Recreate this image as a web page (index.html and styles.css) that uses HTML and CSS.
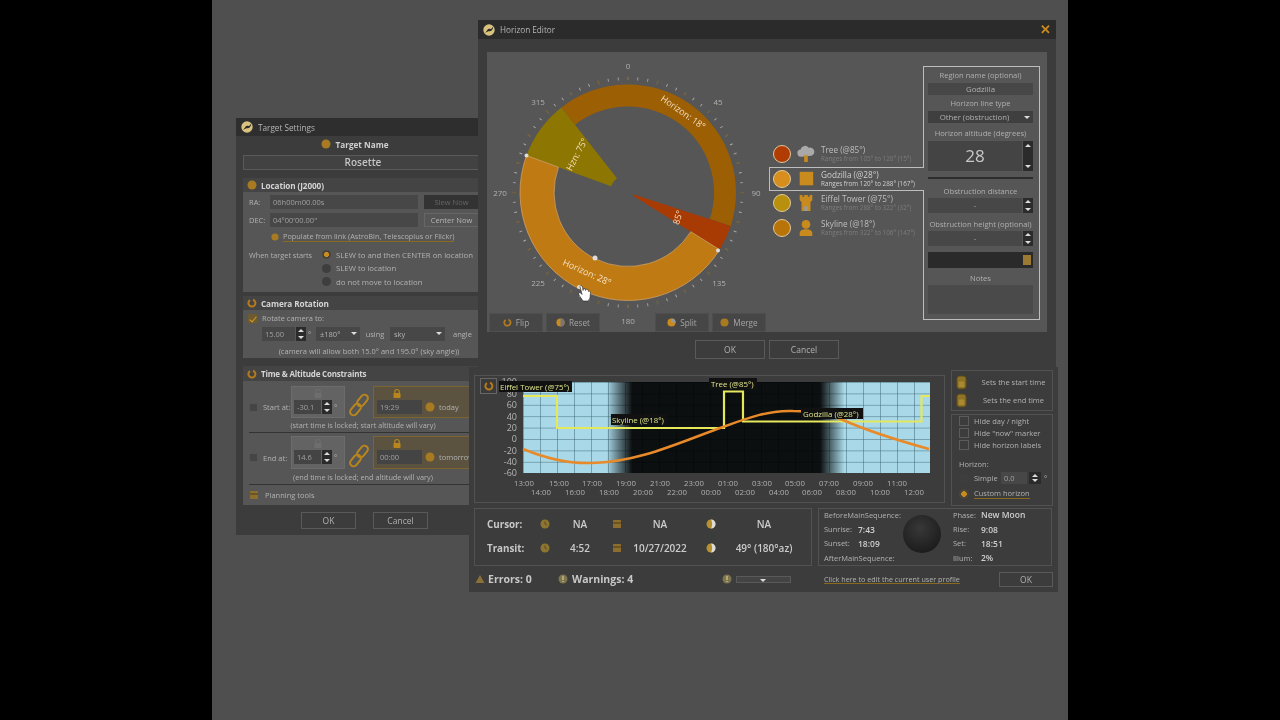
FILE: index.html
```html
<!DOCTYPE html>
<html lang="en">
<head>
<meta charset="utf-8">
<title>Horizon Editor</title>
<link rel="stylesheet" href="styles.css">
</head>
<body>
<svg class="defs" width="0" height="0" aria-hidden="true">
  <defs>
    <symbol id="logo" viewBox="0 0 20 20"><circle cx="10" cy="10" r="9.5" fill="#d8c27e"/><path d="M3 15C6 14 7 8 10 8s3 2 7-4c0 5-3 8-6 8s-4 1-8 3z" fill="#2b2b2b"/></symbol>
    <symbol id="dot" viewBox="0 0 20 20"><circle cx="10" cy="10" r="9" fill="#a87a22"/></symbol>
    <symbol id="ring" viewBox="0 0 20 20"><path d="M12 3.500A7 7 0 1 1 6 4.200" fill="none" stroke="#b57a1c" stroke-width="4"/></symbol>
    <symbol id="half" viewBox="0 0 20 20"><circle cx="10" cy="10" r="9" fill="#c98a1e"/><path d="M10 1a9 9 0 0 1 0 18z" fill="#777"/></symbol>
    <symbol id="pie" viewBox="0 0 20 20"><circle cx="10" cy="10" r="9" fill="#c98a1e"/><path d="M10 10V1a9 9 0 0 1 9 9z" fill="#999"/></symbol>
    <symbol id="clock" viewBox="0 0 20 20"><circle cx="10" cy="10" r="9" fill="#8d7430"/><path d="M10 5v5l4 2" fill="none" stroke="#5a4a20" stroke-width="2"/></symbol>
    <symbol id="cal" viewBox="0 0 20 20"><rect x="2" y="2" width="16" height="16" rx="1" fill="#8d6e2e"/><path d="M2 8h16" stroke="#4a3a18" stroke-width="2"/></symbol>
    <symbol id="moonic" viewBox="0 0 20 20"><circle cx="10" cy="10" r="9" fill="#b8902e"/><path d="M10 1a9 9 0 0 1 0 18c3-5 3-13 0-18z" fill="#ddd"/></symbol>
    <symbol id="warn" viewBox="0 0 20 20"><circle cx="10" cy="10" r="9" fill="#7d7450"/><path d="M10 4v8M10 14v2" stroke="#d8c98a" stroke-width="2.4"/></symbol>
    <symbol id="tri" viewBox="0 0 20 20"><path d="M10 2l9 16H1z" fill="#8a7038"/></symbol>
    <symbol id="lock" viewBox="0 0 20 20"><path d="M5.500 9V6.500a4.500 4.500 0 0 1 9 0V9" fill="none" stroke="currentColor" stroke-width="2.4"/><rect x="3" y="9" width="14" height="10" rx="1.500" fill="currentColor"/></symbol>
    <symbol id="chain" viewBox="0 0 26 26"><g fill="none" stroke="#b8861c" stroke-width="2"><rect x="13" y="2" width="7" height="13" rx="3.500" transform="rotate(40 16.500 8.500)"/><rect x="6" y="11" width="7" height="13" rx="3.500" transform="rotate(40 9.500 17.500)"/></g></symbol>
    <symbol id="shield" viewBox="0 0 12 16"><rect x="1" y="1" width="10" height="14" rx="3" fill="#8e7226" stroke="#5a4a1c"/><rect x="3" y="7" width="6" height="6" rx="1" fill="#a98a30"/></symbol>
    <symbol id="tree" viewBox="0 0 20 20"><path d="M5 13a4 4 0 0 1-1-8 5 5 0 0 1 9-2 4.500 4.500 0 0 1 3 9z" fill="#a9a9a9"/><path d="M8 10l1 2 1-1 1 1 1-2v9H8z" fill="#c98a1e"/></symbol>
    <symbol id="square" viewBox="0 0 20 20"><rect x="3" y="2" width="15" height="15" fill="#c98a1e"/></symbol>
    <symbol id="castle" viewBox="0 0 20 20"><path d="M3 1h3v2h2V1h4v2h2V1h3v6l-2 2v10H5V9L3 7z" fill="#c98a1e"/><path d="M8 19v-4a2 2 0 0 1 4 0v4z" fill="#999"/></symbol>
    <symbol id="person" viewBox="0 0 20 20"><circle cx="10" cy="6" r="4.800" fill="#c98a1e"/><path d="M3 19v-3c0-3 3-4.500 7-4.500s7 1.500 7 4.500v3z" fill="#c98a1e"/></symbol>
    <pattern id="grid" x="523" y="382" width="17" height="11.400" patternUnits="userSpaceOnUse"><path d="M17 0H0V11.400" fill="none" stroke="#3e6676" stroke-width="1"/></pattern>
    <linearGradient id="night" gradientUnits="userSpaceOnUse" x1="523" x2="930" y1="0" y2="0">
      <stop offset=".205" stop-color="#000" stop-opacity="0"/>
      <stop offset=".268" stop-color="#000" stop-opacity=".93"/>
      <stop offset=".73" stop-color="#000" stop-opacity=".93"/>
      <stop offset=".79" stop-color="#000" stop-opacity="0"/>
    </linearGradient>
    <radialGradient id="moon" cx=".45" cy=".35" r=".7"><stop offset="0" stop-color="#383838"/><stop offset="1" stop-color="#1a1a1a"/></radialGradient>
  </defs>
</svg>

<div class="desktop">

  <section class="win win-target">
    <header class="titlebar"><svg class="logo"><use href="#logo"/></svg><span>Target Settings</span></header>
    <div class="t-name"><svg class="ic10"><use href="#dot"/></svg><b>Target Name</b></div>
    <div class="t-rosette">Rosette</div>

    <h3 class="sec"><svg class="ic10"><use href="#dot"/></svg>Location (J2000)</h3>
    <div class="panel p-loc">
      <div class="f-row"><span class="lbl-ra">RA:</span><span class="in in-coord">06h00m00.00s</span><span class="btn btn-dark">Slew Now</span></div>
      <div class="f-row mt4"><span class="lbl-ra">DEC:</span><span class="in in-coord">04°00'00.00"</span><span class="btn">Center Now</span></div>
      <div class="populate"><svg class="ic8"><use href="#dot"/></svg><span class="link">Populate from link (AstroBin, Telescopius or Flickr)</span></div>
      <div class="radios">
        <div class="r-row"><span class="r-lbl">When target starts</span><i class="radio on"></i><span>SLEW to and then CENTER on location</span></div>
        <div class="r-row"><span class="r-lbl"></span><i class="radio"></i><span>SLEW to location</span></div>
        <div class="r-row"><span class="r-lbl"></span><i class="radio"></i><span>do not move to location</span></div>
      </div>
    </div>

    <h3 class="sec"><svg class="ic10"><use href="#ring"/></svg>Camera Rotation</h3>
    <div class="panel p-cam">
      <div class="c-row1"><i class="check on"></i><span>Rotate camera to:</span></div>
      <div class="c-row2">
        <span class="in in-rot">15.00</span><span class="spin"><i class="up"></i><i class="down"></i></span><span class="deg">°</span>
        <span class="sel sel-a">±180°<i class="caret"></i></span><span class="using">using</span>
        <span class="sel sel-b">sky<i class="caret"></i></span><span class="angle">angle</span>
      </div>
      <div class="note note-cam">(camera will allow both 15.0° and 195.0° (sky angle))</div>
    </div>

    <h3 class="sec sec-time"><svg class="ic10"><use href="#ring"/></svg>Time &amp; Altitude Constraints</h3>
    <div class="panel p-time">
      <div class="ta-row">
        <i class="check"></i><span class="ta-lbl">Start at:</span>
        <div class="ta-box"><svg class="ta-lock dim"><use href="#lock"/></svg><div class="ta-line"><span class="in in-alt">-30.1</span><span class="spin"><i class="up"></i><i class="down"></i></span><span class="deg">°</span></div></div>
        <svg class="chain"><use href="#chain"/></svg>
        <div class="ta-box active"><svg class="ta-lock"><use href="#lock"/></svg><div class="ta-line"><span class="in in-time">19:29</span><svg class="ta-ok"><use href="#dot"/></svg><span>today</span></div></div>
      </div>
      <div class="note note-a">(start time is locked; start altitude will vary)</div>
      <div class="rule"></div>
      <div class="ta-row ta-row2">
        <i class="check"></i><span class="ta-lbl">End at:</span>
        <div class="ta-box"><svg class="ta-lock dim"><use href="#lock"/></svg><div class="ta-line"><span class="in in-alt">14.6</span><span class="spin"><i class="up"></i><i class="down"></i></span><span class="deg">°</span></div></div>
        <svg class="chain"><use href="#chain"/></svg>
        <div class="ta-box active"><svg class="ta-lock"><use href="#lock"/></svg><div class="ta-line"><span class="in in-time">00:00</span><svg class="ta-ok"><use href="#dot"/></svg><span>tomorrow</span></div></div>
      </div>
      <div class="note note-b">(end time is locked; end altitude will vary)</div>
      <div class="rule r2"></div>
      <div class="planning"><svg class="ic10"><use href="#cal"/></svg><span>Planning tools</span></div>
    </div>
    <footer class="t-foot"><span class="btn-big b-ok">OK</span><span class="btn-big b-cancel">Cancel</span></footer>
  </section>

  <section class="win win-horizon">
    <header class="titlebar tb-h"><svg class="logo"><use href="#logo"/></svg><span>Horizon Editor</span><span class="close">✕</span></header>
    <div class="h-panel">
      <div class="h-left">
        <svg class="wheel" viewBox="-140 -140 280 280" width="280" height="281">
          <circle r="114" fill="none" stroke="#a9a9a9" stroke-width="3" pathLength="360" stroke-dasharray="0.45 4.550" stroke-dashoffset="0.22" transform="rotate(-90)"/>
          <circle r="114" fill="none" stroke="#6f5f3a" stroke-width="4" pathLength="360" stroke-dasharray="0.7 14.300" stroke-dashoffset="0.35" transform="rotate(-90)"/>
          <path d="M-66.500 -85.100A108 108 0 0 1 102.700 33.400L81.800 26.600A86 86 0 0 0 -52.900 -67.800Z" fill="#9c5f04"/>
          <path d="M102.700 33.400A108 108 0 0 1 91.600 57.200L5.100 3.200L5.700 1.900Z" fill="#a83a04"/>
          <path d="M-101.500 -36.900A108 108 0 0 1 -66.500 -85.100L-11.100 -14.200A18 18 0 0 0 -16.900 -6.200Z" fill="#8e7602"/>
          <path d="M91.600 57.200A108 108 0 0 1 -101.500 -36.900L-69.500 -25.300A74 74 0 0 0 62.800 39.200Z" fill="#bf7a14" stroke="#d8a868" stroke-width=".7"/>
          <g class="wheel-lbl">
            <text x="55" y="-80" transform="rotate(35 55 -80)" dy="3">Horizon: 18°</text>
            <text x="-41" y="80" transform="rotate(24 -41 80)" dy="3">Horizon: 28°</text>
            <text x="-51" y="-38" transform="rotate(-62 -51 -38)" dy="3">Hzn: 75°</text>
            <text x="50" y="25" transform="rotate(-72 50 25)" dy="3">85°</text>
          </g>
          <g class="wheel-deg">
            <text x="0" y="-124">0</text><text x="90" y="-88">45</text><text x="128" y="3">90</text><text x="91" y="93">135</text>
            <text x="0" y="131">180</text><text x="-90" y="93">225</text><text x="-128" y="3">270</text><text x="-90" y="-88">315</text>
          </g>
          <g fill="#ddd"><circle cx="90" cy="58" r="2"/><circle cx="-101.500" cy="-37" r="2"/><circle cx="-49" cy="94.600" r="2"/><circle cx="-33" cy="65.600" r="2.500"/></g>
          <path class="hand" d="M-48 94l1-1 1.500 1 .5 4 .5-2 1.500 0 .5 2 1-1.500 1.500.5 .5 2 1-.5 1 1-.5 6-2 3h-5l-4-6-.5-2 1.500-.5 2 2z"/>
        </svg>
        <div class="h-btns">
          <span class="tool"><svg class="ic9"><use href="#ring"/></svg>Flip</span>
          <span class="tool"><svg class="ic9"><use href="#half"/></svg>Reset</span>
          <span class="tool-gap"></span>
          <span class="tool"><svg class="ic9"><use href="#pie"/></svg>Split</span>
          <span class="tool"><svg class="ic9"><use href="#dot"/></svg>Merge</span>
        </div>
      </div>
      <ul class="legend">
        <li class="lg"><i class="swatch c-tree"></i><svg class="lg-ic"><use href="#tree"/></svg><div><b>Tree (@85°)</b><small>Ranges from 105° to 120° (15°)</small></div></li>
        <li class="lg sel-row"><i class="swatch c-god"></i><svg class="lg-ic"><use href="#square"/></svg><div><b>Godzilla (@28°)</b><small>Ranges from 120° to 288° (167°)</small></div></li>
        <li class="lg"><i class="swatch c-eif"></i><svg class="lg-ic"><use href="#castle"/></svg><div><b>Eiffel Tower (@75°)</b><small>Ranges from 288° to 322° (32°)</small></div></li>
        <li class="lg"><i class="swatch c-sky"></i><svg class="lg-ic"><use href="#person"/></svg><div><b>Skyline (@18°)</b><small>Ranges from 322° to 106° (147°)</small></div></li>
      </ul>
      <aside class="editor">
        <label class="e-lbl first">Region name (optional)</label>
        <div class="e-in e-12">Godzilla</div>
        <label class="e-lbl">Horizon line type</label>
        <div class="e-in e-12 e-sel">Other (obstruction)<i class="caret"></i></div>
        <label class="e-lbl m4">Horizon altitude (degrees)</label>
        <div class="e-num"><div class="e-big">28</div><span class="spin spin-tall"><i class="up"></i><i class="down"></i></span></div>
        <div class="e-rule"></div>
        <label class="e-lbl m6">Obstruction distance</label>
        <div class="e-num e-15"><div class="e-dash">-</div><span class="spin"><i class="up"></i><i class="down"></i></span></div>
        <label class="e-lbl m5">Obstruction height (optional)</label>
        <div class="e-num e-15"><div class="e-dash">-</div><span class="spin"><i class="up"></i><i class="down"></i></span></div>
        <div class="e-bar"><i></i></div>
        <label class="e-lbl m4">Notes</label>
        <div class="e-notes"></div>
      </aside>
    </div>
    <footer class="h-foot"><span class="btn-big">OK</span><span class="btn-big">Cancel</span></footer>
  </section>

  <section class="win win-seq">
    <div class="s-top">
      <div class="chart-panel">
        <svg class="chart" viewBox="474 375 471 128" width="471" height="128">
          <rect x="523" y="382" width="407" height="91" fill="#a9d9e8"/>
          <rect x="523" y="382" width="407" height="91" fill="url(#grid)"/>
          <rect x="523" y="382" width="407" height="91" fill="url(#night)"/>
          <path d="M523 396H557V428H724V391.500H743V421.500H921.500V396H930" fill="none" stroke="#e6e85c" stroke-width="2.200"/>
          <path d="M523 449C545 458 570 464 592 463C640 462 680 442 723 427C750 417 770 410 793 411C810 411 830 414 843 420C870 432 900 441 929 449" fill="none" stroke="#e88a2a" stroke-width="2.500"/>
          <g class="y-ax"><text x="517" y="385">100</text><text x="517" y="396.500">80</text><text x="517" y="408">60</text><text x="517" y="419.500">40</text><text x="517" y="431">20</text><text x="517" y="442">0</text><text x="517" y="453.500">-20</text><text x="517" y="465">-40</text><text x="517" y="476">-60</text></g>
          <g class="x-ax">
            <text x="524" y="486">13:00</text><text x="559" y="486">15:00</text><text x="592" y="486">17:00</text><text x="626" y="486">19:00</text><text x="660" y="486">21:00</text><text x="694" y="486">23:00</text><text x="728" y="486">01:00</text><text x="762" y="486">03:00</text><text x="795" y="486">05:00</text><text x="829" y="486">07:00</text><text x="863" y="486">09:00</text><text x="897" y="486">11:00</text>
            <text x="541" y="495">14:00</text><text x="575" y="495">16:00</text><text x="609" y="495">18:00</text><text x="643" y="495">20:00</text><text x="677" y="495">22:00</text><text x="711" y="495">00:00</text><text x="745" y="495">02:00</text><text x="779" y="495">04:00</text><text x="812" y="495">06:00</text><text x="846" y="495">08:00</text><text x="880" y="495">10:00</text><text x="914" y="495">12:00</text>
          </g>
          <g class="tag">
            <rect x="499" y="381" width="73" height="11"/><text x="500" y="390">Eiffel Tower (@75°)</text>
            <rect x="611" y="414" width="56" height="11"/><text x="612" y="423">Skyline (@18°)</text>
            <rect x="709" y="378" width="48" height="11"/><text x="711" y="387">Tree (@85°)</text>
            <rect x="801" y="408" width="62" height="11"/><text x="803" y="417">Godzilla (@28°)</text>
          </g>
        </svg>
        <span class="sync"><svg class="ic10"><use href="#ring"/></svg></span>
      </div>
      <div class="s-side">
        <div class="box box-set">
          <div class="set-row"><svg class="ic-sh"><use href="#shield"/></svg><span>Sets the start time</span></div>
          <div class="set-row"><svg class="ic-sh"><use href="#shield"/></svg><span>Sets the end time</span></div>
        </div>
        <div class="box box-opt">
          <div class="o-row"><i class="check"></i><span>Hide day / night</span></div>
          <div class="o-row"><i class="check"></i><span>Hide "now" marker</span></div>
          <div class="o-row"><i class="check"></i><span>Hide horizon labels</span></div>
          <div class="o-title">Horizon:</div>
          <div class="o-row o-radio"><i class="radio big"></i><span class="o-simple">Simple</span><span class="in in-simple">0.0</span><span class="spin"><i class="up"></i><i class="down"></i></span><span class="deg">°</span></div>
          <div class="o-row o-radio o-cust"><i class="radio big on"></i><span class="link">Custom horizon</span></div>
        </div>
      </div>
    </div>
    <div class="s-info">
      <div class="box info-a">
        <b class="i-l">Cursor:</b><svg class="ic10 i-c"><use href="#clock"/></svg><b class="i-v">NA</b><svg class="ic10 i-c"><use href="#cal"/></svg><b class="i-v">NA</b><svg class="ic10 i-c"><use href="#moonic"/></svg><b class="i-v">NA</b>
        <b class="i-l">Transit:</b><svg class="ic10 i-c"><use href="#clock"/></svg><b class="i-v">4:52</b><svg class="ic10 i-c"><use href="#cal"/></svg><b class="i-v">10/27/2022</b><svg class="ic10 i-c"><use href="#moonic"/></svg><b class="i-v">49° (180°az)</b>
      </div>
      <div class="box info-b">
        <div class="sun">
          <div>BeforeMainSequence:</div>
          <div><span class="k">Sunrise:</span><b>7:43</b></div>
          <div><span class="k">Sunset:</span><b>18:09</b></div>
          <div>AfterMainSequence:</div>
        </div>
        <svg class="moon" viewBox="0 0 38 38"><circle cx="19" cy="19" r="19" fill="url(#moon)"/></svg>
        <div class="sun phase">
          <div><span class="k">Phase:</span><b>New Moon</b></div>
          <div><span class="k">Rise:</span><b>9:08</b></div>
          <div><span class="k">Set:</span><b>18:51</b></div>
          <div><span class="k">Illum:</span><b>2%</b></div>
        </div>
      </div>
    </div>
    <footer class="s-foot">
      <svg class="ic10"><use href="#tri"/></svg><b class="f-err">Errors: 0</b>
      <svg class="ic10"><use href="#warn"/></svg><b class="f-warn">Warnings: 4</b>
      <svg class="ic10"><use href="#warn"/></svg><span class="f-drop"><i class="caret"></i></span>
      <span class="f-link">Click here to edit the current user profile</span>
      <span class="btn-big f-ok">OK</span>
    </footer>
  </section>
</div>
</body>
</html>
```

FILE: styles.css
```css
* { box-sizing: border-box; }
html, body { margin: 0; height: 100%; background: #000; overflow: hidden; }
body { font-family: "Open Sans", "Noto Sans", sans-serif; font-size: 7.5px; color: #b2b2b2; }
.defs { position: absolute; }
i { display: block; font-style: normal; flex: none; }
svg { display: block; flex: none; }
ul { list-style: none; margin: 0; padding: 0; }

.desktop { position: relative; width: 856px; height: 720px; margin: 0 auto; background: #4f4f4f; filter: blur(.4px); }
.win { position: absolute; background: #3c3c3c; }
.win-target { left: 24px; top: 118px; width: 254px; height: 417px; padding: 18px 7px 0; }
.win-horizon { left: 266px; top: 20px; width: 578px; height: 347px; }
.win-seq { left: 257px; top: 367px; width: 589px; height: 225px; }

.titlebar { display: flex; align-items: center; gap: 5px; height: 18px; background: #2e2e2e; padding-left: 5px; font-size: 8.2px; color: #b5b5b5; }
.win-target .titlebar { margin: -18px -7px 0; }
.logo { width: 12px; height: 12px; }
.tb-h { height: 19px; background: #2b2b2b; }
.close { margin-left: auto; margin-right: 5px; margin-top: -1px; color: #c98a1e; font-size: 13px; font-weight: 700; line-height: 13px; }

.ic8 { width: 8px; height: 8px; }
.ic9 { width: 9px; height: 9px; }
.ic10 { width: 10px; height: 10px; }

.t-name { height: 19px; display: flex; align-items: center; justify-content: center; gap: 4px; color: #d0d0d0; font-size: 8.2px; padding: 0 16px 3px 0; }
.t-rosette { height: 15px; margin-bottom: 8px; border: 1px solid #5a5a5a; background: #424242; text-align: center; line-height: 13px; font-size: 10px; font-weight: 600; color: #c4c4c4; }
.sec { display: flex; align-items: center; gap: 4px; height: 14px; margin: 0; padding-left: 4px; background: #444; color: #d4d4d4; font-size: 8.2px; font-weight: 700; letter-spacing: -.1px; }
.sec-time { height: 15px; font-size: 8px; letter-spacing: -.2px; }
.panel { background: #565656; }
.p-loc { height: 100px; margin-bottom: 4px; padding: 3px 0 0 6px; }
.p-cam { height: 48px; margin-bottom: 8px; padding-top: 2px; }
.p-time { height: 124px; padding-top: 5px; }

.f-row { display: flex; align-items: center; height: 14px; }
.mt4 { margin-top: 4px; }
.lbl-ra { width: 21px; }
.in { display: block; background: #474747; color: #a0a0a0; height: 14px; line-height: 14px; padding-left: 3px; }
.in-coord { width: 148px; margin-right: 6px; }
.btn { width: 55px; height: 14px; line-height: 12px; text-align: center; border: 1px solid #666; color: #b5b5b5; flex: none; }
.btn-dark { background: #333; border-color: #333; color: #666; }
.populate { display: flex; align-items: center; gap: 4px; height: 12px; margin: 4px 0 0 22px; font-size: 7.35px; }
.link { border-bottom: 1px solid #8a6a1e; line-height: 9px; color: #b2b2b2; }
.radios { margin-top: 5px; font-size: 7.8px; }
.r-row { display: flex; align-items: center; height: 13.500px; white-space: nowrap; }
.r-lbl { width: 73px; font-size: 7.3px; }
.radio { width: 9px; height: 9px; border-radius: 50%; background: #3e3e3e; margin-right: 5px; }
.radio.on { background: radial-gradient(circle closest-side, #c98a1e 0 52%, #4a4438 60%); }
.check { position: relative; width: 9px; height: 9px; background: #454545; border: 1px solid #555; }
.check.on { background: #6e5a2c; border-color: #6e5a2c; }
.check.on::after { content: ""; position: absolute; left: 2px; top: 0; width: 3px; height: 6px; border: solid #d89a2a; border-width: 0 1.400px 1.400px 0; transform: rotate(40deg); }

.c-row1 { display: flex; align-items: center; gap: 5px; height: 12px; padding-left: 5px; }
.c-row2 { display: flex; align-items: center; height: 14px; margin: 3px 0 4px 19px; }
.in-rot { width: 33px; }
.spin { display: flex; flex-direction: column; justify-content: space-between; width: 10px; height: 14px; background: #2b2b2b; margin-left: 1px; flex: none; padding: 2px 0; }
.up, .down { width: 0; height: 0; margin: 0 auto; border-left: 3px solid transparent; border-right: 3px solid transparent; }
.up { border-bottom: 3px solid #ddd; }
.down { border-top: 3px solid #ddd; }
.deg { width: 10px; padding-left: 2px; flex: none; }
.sel { position: relative; display: block; height: 14px; line-height: 14px; padding-left: 4px; background: #474747; flex: none; }
.sel-a { width: 44px; }
.sel-b { width: 55px; }
.using { width: 30px; text-align: center; }
.angle { padding-left: 8px; }
.caret { position: absolute; right: 3px; top: 5px; width: 0; height: 0; border-left: 3px solid transparent; border-right: 3px solid transparent; border-top: 3px solid #ddd; }
.note { height: 12px; line-height: 12px; text-align: center; }
.note-cam { padding-left: 12px; }
.note-a, .note-b { font-size: 7.3px; }
.note-a { margin-top: 1px; }
.note-b { margin-top: 2px; }

.ta-row { display: flex; align-items: center; height: 32px; padding-left: 6px; }
.ta-row2 { height: 33px; }
.ta-row > .check, .ta-lbl { margin-top: 10px; }
.ta-lbl { width: 28px; margin-left: 5px; flex: none; }
.ta-box { width: 54px; height: 100%; background: #636363; border: 1px solid #6c6c6c; flex: none; display: flex; flex-direction: column; align-items: center; }
.ta-box.active { width: 110px; background: #5b5340; border-color: #7b6430; align-items: flex-start; padding-left: 3px; }
.ta-lock { width: 10px; height: 11px; margin-top: 1px; color: #b8861c; }
.ta-box.active .ta-lock { margin-left: 15px; }
.ta-lock.dim { color: #6e6e6e; }
.ta-line { display: flex; align-items: center; height: 14px; margin-top: 1px; }
.in-alt { width: 27px; background: #444; }
.in-time { width: 45px; background: #444; margin-right: 3px; }
.ta-ok { width: 10px; height: 10px; margin-right: 4px; }
.chain { width: 26px; height: 26px; margin: 6px 1px 0; }
.rule { height: 1px; background: #333; margin: 1px 0 3px 6px; }
.rule.r2 { margin-bottom: 0; }
.planning { display: flex; align-items: center; gap: 6px; height: 20px; padding-left: 6px; }
.t-foot { display: flex; margin-top: 7px; padding-left: 58px; gap: 17px; }
.btn-big { display: block; width: 70px; height: 19px; line-height: 17px; text-align: center; border: 1px solid #5a5a5a; background: #3c3c3c; font-size: 8.500px; color: #b0b0b0; flex: none; }
.b-ok, .b-cancel { width: 55px; height: 17px; line-height: 15px; }

.h-panel { display: flex; align-items: flex-start; height: 280px; margin: 13px 9px 0; background: #565656; }
.h-left { display: grid; width: 282px; height: 280px; }
.wheel { grid-area: 1 / 1; margin-left: 1px; }
.wheel-lbl text { fill: #f4e0c0; font-size: 9px; text-anchor: middle; }
.wheel-deg text { fill: #b0b0b0; font-size: 8px; text-anchor: middle; }
.hand { fill: #fff; stroke: #222; stroke-width: .6; }
.h-btns { grid-area: 1 / 1; align-self: end; display: flex; gap: 3px; margin: 0 3px 1px 2px; height: 19px; }
.tool { display: flex; align-items: center; justify-content: center; gap: 4px; width: 54px; height: 19px; background: #464646; border: 1px solid #4e4e4e; color: #a5a5a5; font-size: 8.200px; }
.tool-gap { flex: 1; }

.legend { width: 154px; margin-top: 90px; }
.lg { position: relative; display: flex; align-items: center; height: 24.500px; padding-left: 4px; }
.sel-row { border: 1px solid #bdbdbd; border-right: 0; background: #565656; margin-right: -1px; z-index: 1; padding-left: 3px; }
.swatch { width: 18px; height: 18px; border-radius: 50%; border: 1px solid #e0c898; }
.c-tree { background: #b03c04; }
.c-god { background: #d88e1c; }
.c-eif { background: #b8900e; }
.c-sky { background: #b87408; }
.lg-ic { width: 18px; height: 18px; margin: 0 6px 0 6px; }
.lg b { display: block; font-weight: 400; font-size: 8.200px; line-height: 10px; color: #bebebe; }
.lg small { display: block; font-size: 6.300px; line-height: 8px; color: #7d7d7d; white-space: nowrap; }
.sel-row small, .sel-row b { color: #d0d0d0; }

.editor { width: 117px; height: 254px; margin-top: 14px; border: 1px solid #bdbdbd; padding: 2px 6px 0 4px; }
.e-lbl { display: block; height: 12px; line-height: 12px; margin-top: 2px; text-align: center; color: #b0b0b0; font-size: 7.600px; }
.e-lbl.first { margin-top: 0; }
.e-lbl.m4 { margin-top: 4px; }
.e-lbl.m5 { margin-top: 5px; }
.e-lbl.m6 { margin-top: 6px; }
.e-in { position: relative; margin-top: 2px; background: #474747; text-align: center; color: #b0b0b0; font-size: 7.800px; }
.e-12 { height: 12px; line-height: 12px; }
.e-sel { background: #3f3f3f; padding-right: 12px; }
.e-num { display: flex; height: 30px; margin-top: 2px; }
.e-15 { height: 15px; margin-top: 1px; }
.e-big { flex: 1; background: #444; text-align: center; line-height: 30px; font-size: 17px; color: #c8c8c8; }
.e-dash { flex: 1; background: #474747; text-align: center; line-height: 15px; }
.e-num .spin { height: 100%; }
.spin-tall { padding: 3px 0; }
.e-rule { height: 2px; margin-top: 6px; background: #2d2d2d; }
.e-bar { position: relative; height: 16px; margin-top: 6px; background: #2a2a2a; }
.e-bar i { position: absolute; right: 2px; top: 3px; width: 8px; height: 10px; background: #9b7a34; }
.e-notes { height: 29px; margin-top: 1px; background: #4a4a4a; }
.h-foot { display: flex; justify-content: center; gap: 4px; margin-top: 8px; }

.s-top { display: flex; align-items: flex-start; height: 138px; padding: 3px 0 0 5px; }
.chart-panel { position: relative; width: 471px; height: 128px; margin-top: 5px; border: 1px solid #525252; }
.chart { margin: -1px; }
.y-ax text { fill: #b5b5b5; font-size: 9px; text-anchor: end; }
.x-ax text { fill: #b0b0b0; font-size: 7.800px; text-anchor: middle; }
.tag rect { fill: #111; }
.tag text { fill: #dfe58a; font-size: 7.900px; }
.sync { position: absolute; left: 5px; top: 2px; display: flex; align-items: center; justify-content: center; width: 17px; height: 16px; background: #3a3a3a; border: 1px solid #666; }
.s-side { width: 102px; margin-left: 6px; }
.box { border: 1px solid #525252; }
.box-set { height: 41px; padding: 2px 0 0 4px; margin-bottom: 3px; }
.set-row { display: flex; align-items: center; height: 18px; }
.set-row span { flex: 1; text-align: center; padding-left: 8px; }
.ic-sh { width: 11px; height: 15px; }
.box-opt { height: 92px; padding: 0 0 0 7px; }
.box-opt .check { width: 10px; height: 10px; background: #3c3c3c; border-color: #5c5c5c; }
.o-row { display: flex; align-items: center; gap: 5px; height: 12px; }
.o-title { margin-top: 7.500px; line-height: 11px; }
.o-radio { height: 14px; margin-top: 1.500px; }
.radio.big { width: 10px; height: 10px; margin-right: 0; }
.o-simple { width: 22px; }
.in-simple { width: 27px; height: 12px; line-height: 12px; }
.o-radio .spin { width: 12px; height: 12px; margin-left: -3px; }
.o-radio .deg { margin-left: -4px; }
.o-cust { margin-top: 2px; }

.s-info { display: flex; gap: 6px; height: 58px; margin: 3px 0 0 5px; }
.info-a { display: grid; width: 338px; padding: 3px 0 0 12px; grid-template-columns: 50px 16px 54px 20px 66px 36px 70px; grid-auto-rows: 24px; align-items: center; justify-items: center; }
.i-l { justify-self: start; font-size: 9.800px; color: #c8c8c8; }
.i-v { font-size: 10px; font-weight: 600; color: #cccccc; white-space: nowrap; }
.info-b { display: flex; width: 234px; padding-left: 5px; }
.sun { width: 79px; margin-top: -1.500px; white-space: nowrap; }
.sun > div { display: flex; align-items: center; height: 14.400px; }
.sun b { color: #cfcfcf; font-size: 8.500px; font-weight: 600; }
.k { width: 34px; flex: none; }
.moon { width: 38px; height: 38px; margin: 6px 12px 0 0; }
.phase .k { width: 28px; }
.phase { width: 90px; }

.s-foot { display: flex; align-items: center; height: 26px; padding-left: 6px; }
.f-err { width: 70px; margin-left: 3px; font-size: 10.500px; color: #c8c8c8; }
.f-warn { width: 150px; margin-left: 4px; font-size: 10.500px; color: #c8c8c8; }
.f-drop { position: relative; display: block; width: 55px; height: 7px; margin-left: 4px; background: #444; border: 1px solid #5a5a5a; }
.f-drop .caret { right: 24px; top: 2px; }
.f-link { margin-left: 33px; width: 175px; flex: none; font-size: 7.200px; text-decoration: underline; text-decoration-color: #8a6a1e; }
.f-ok { width: 54px; height: 15px; line-height: 13px; }
```
